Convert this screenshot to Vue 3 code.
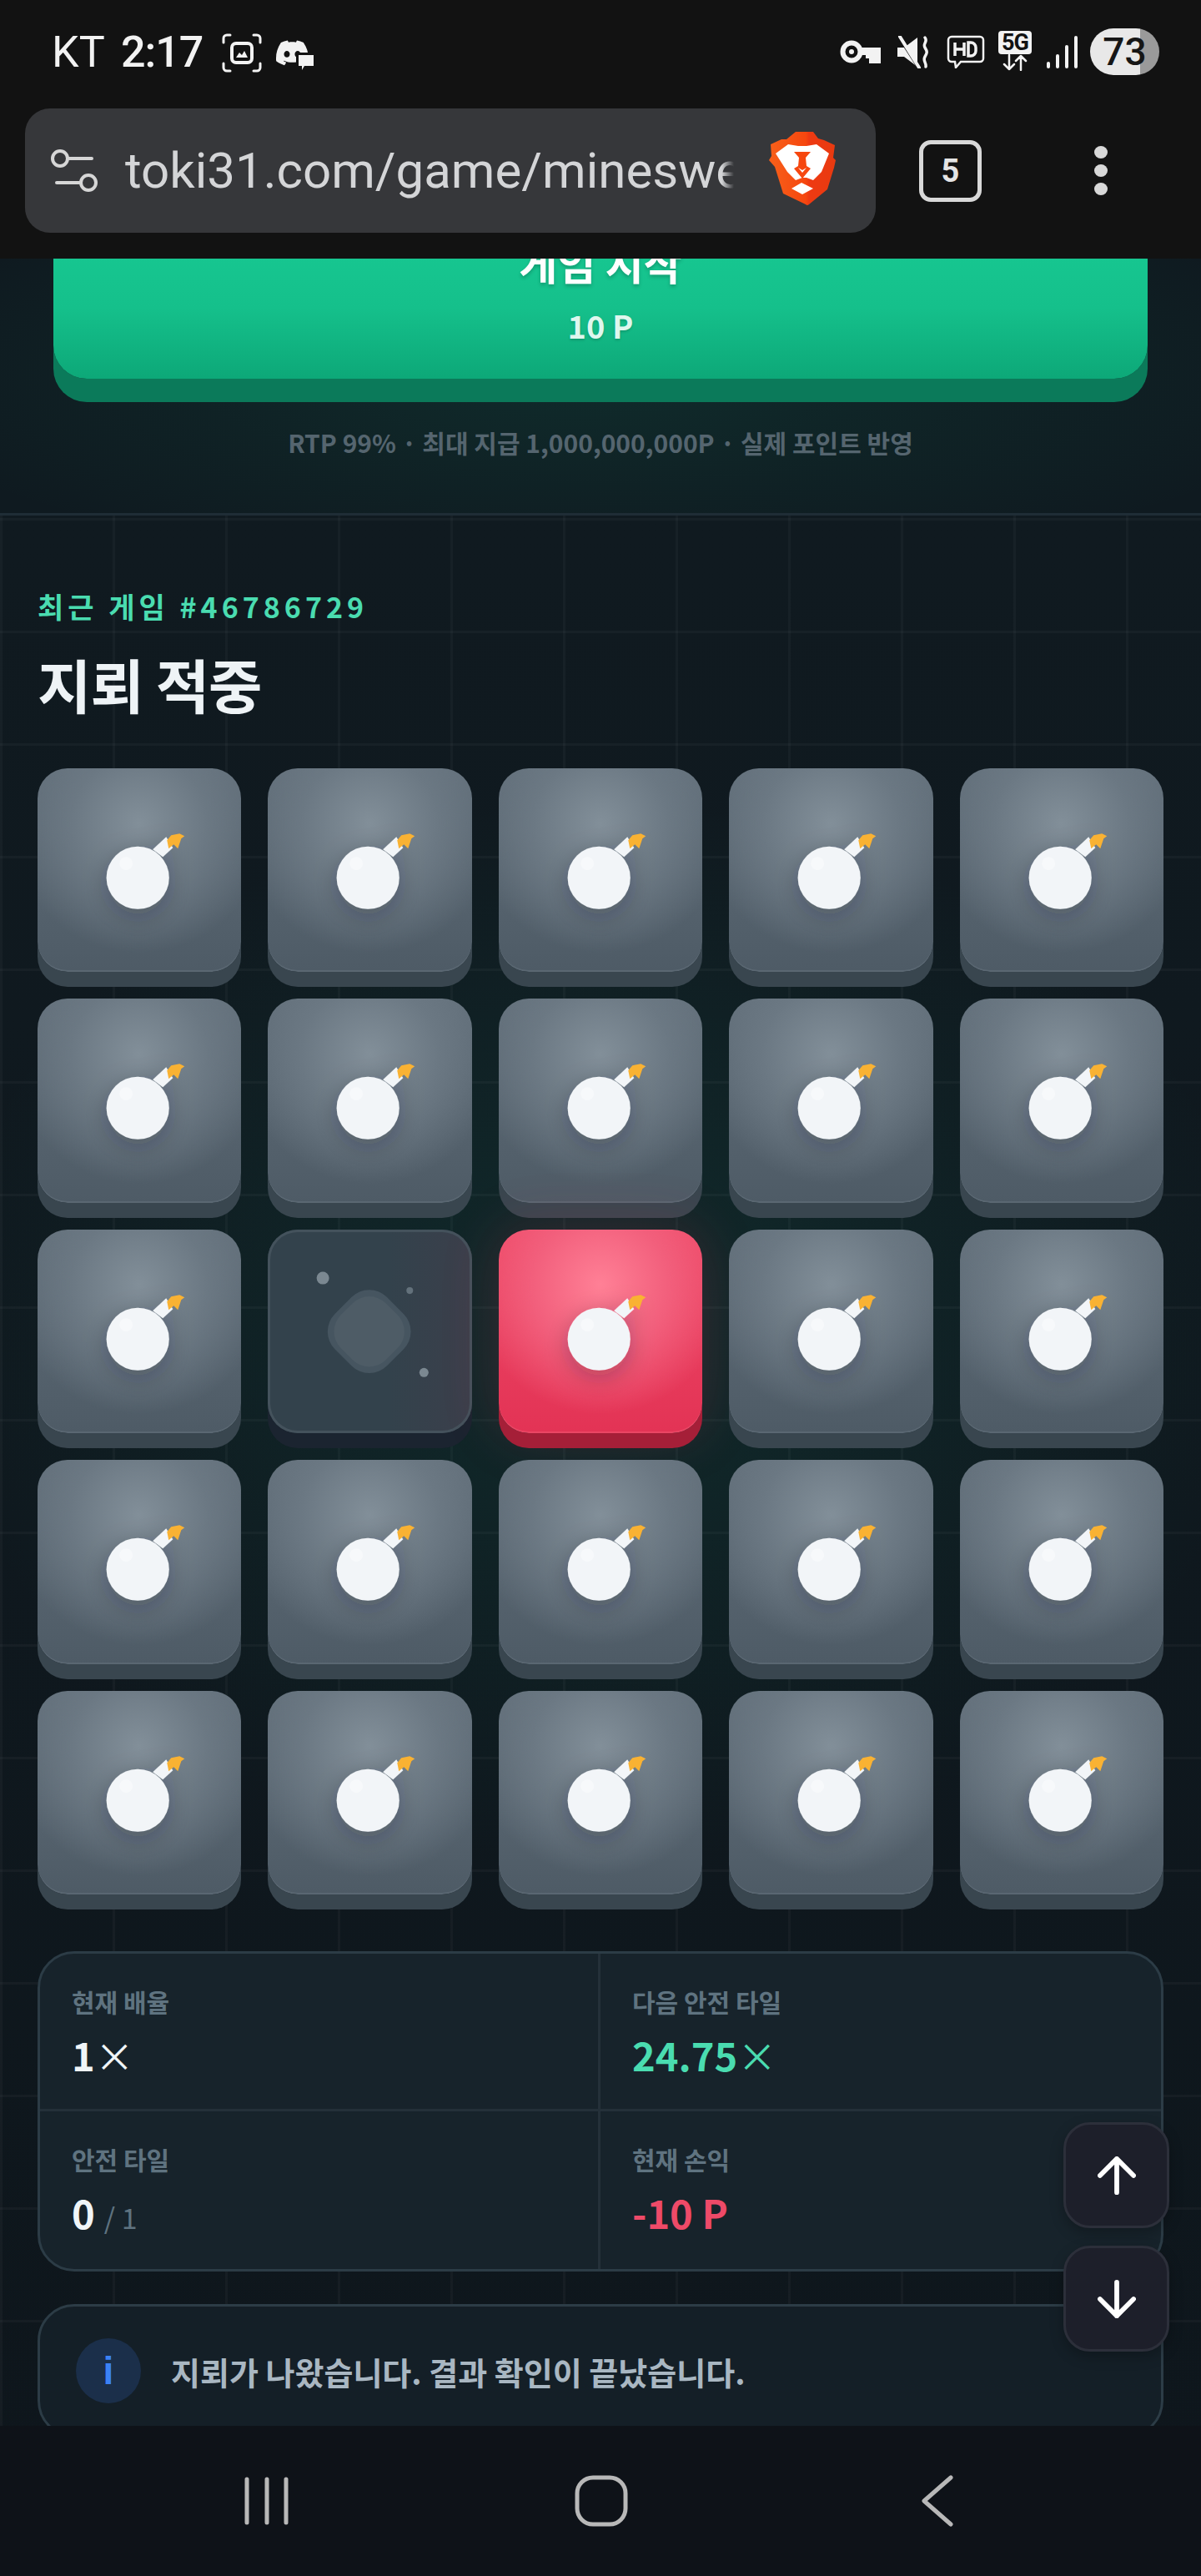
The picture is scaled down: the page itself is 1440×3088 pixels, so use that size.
<template>
  <div class="phone">
    <header class="chrome">
      <div class="status">
        <div class="status-left">
          <span class="carrier">KT</span>
          <span class="clock">2:17</span>
          <svg class="ic-shot" viewBox="0 0 48 47" fill="none" stroke="#f2f2f2" stroke-width="3" stroke-linecap="round">
            <path d="M10 2H6a4 4 0 0 0-4 4v5M38 2h4a4 4 0 0 1 4 4v5M2 36v5a4 4 0 0 0 4 4h4M46 36v5a4 4 0 0 1-4 4h-4" />
            <rect x="12" y="12" width="24" height="23" rx="5" stroke-width="4" />
            <path d="M17 29l4-6 3 3 3-5 4 8z" fill="#f2f2f2" stroke="none" />
          </svg>
          <svg class="ic-discord" viewBox="0 0 45 40">
            <path transform="scale(1.62)" fill="#f2f2f2" fill-rule="evenodd" d="M20.317 4.3698a19.7913 19.7913 0 00-4.8851-1.5152.0741.0741 0 00-.0785.0371c-.211.3753-.4447.8648-.6083 1.2495-1.8447-.2762-3.68-.2762-5.4868 0-.1636-.3933-.4058-.8742-.6177-1.2495a.077.077 0 00-.0785-.037 19.7363 19.7363 0 00-4.8852 1.515.0699.0699 0 00-.0321.0277C.5334 9.0458-.319 13.5799.0992 18.0578a.0824.0824 0 00.0312.0561c2.0528 1.5076 4.0413 2.4228 5.9929 3.0294a.0777.0777 0 00.0842-.0276c.4616-.6304.8731-1.2952 1.226-1.9942a.076.076 0 00-.0416-.1057c-.6528-.2476-1.2743-.5495-1.8722-.8923a.077.077 0 01-.0076-.1277c.1258-.0943.2517-.1923.3718-.2914a.0743.0743 0 01.0776-.0105c3.9278 1.7933 8.18 1.7933 12.0614 0a.0739.0739 0 01.0785.0095c.1202.099.246.1981.3728.2924a.077.077 0 01-.0066.1276 12.2986 12.2986 0 01-1.873.8914.0766.0766 0 00-.0407.1067c.3604.698.7719 1.3628 1.225 1.9932a.076.076 0 00.0842.0286c1.961-.6067 3.9495-1.5219 6.0023-3.0294a.077.077 0 00.0313-.0552c.5004-5.177-.8382-9.6739-3.5485-13.6604a.061.061 0 00-.0312-.0286zM8.02 15.3312c-1.1825 0-2.1569-1.0857-2.1569-2.419 0-1.3332.9555-2.4189 2.157-2.4189 1.2108 0 2.1757 1.0952 2.1568 2.419 0 1.3332-.9555 2.4189-2.1569 2.4189zm7.9748 0c-1.1825 0-2.1569-1.0857-2.1569-2.419 0-1.3332.9554-2.4189 2.1569-2.4189 1.2108 0 2.1757 1.0952 2.1568 2.419 0 1.3332-.946 2.4189-2.1568 2.4189Z" />
            <path d="M24 19h21v21H24z" fill="#121212" />
            <path d="M27 22h18v13H34l-3 5v-5h-4z" fill="#f2f2f2" />
          </svg>
        </div>
        <div class="status-right">
          <svg class="ic-key" viewBox="0 0 49 28" fill="none">
            <circle cx="14" cy="14" r="10.500" stroke="#f2f2f2" stroke-width="6" />
            <circle cx="14" cy="14" r="3" fill="#f2f2f2" />
            <path d="M24 9h25v19H35v-6h-4v-4h-7z" fill="#f2f2f2" />
          </svg>
          <svg class="ic-mute" viewBox="0 0 38 39" fill="none" stroke="#f2f2f2">
            <path d="M0 14h8L24 2v35L8 25H0z" fill="#f2f2f2" stroke="none" />
            <path d="M0 -1l25 39" stroke-width="3" stroke="#121212" />
            <path d="M3 1l23 37" stroke-width="4" stroke-linecap="round" />
            <path d="M33 2c4 5-3 7 0 12s3 6 0 11 2 7 1 12" stroke-width="3.500" stroke-linecap="round" />
          </svg>
          <svg class="ic-hd" viewBox="0 0 46 40" fill="none" stroke="#f2f2f2">
            <path d="M6 2h34a4 4 0 0 1 4 4v22a4 4 0 0 1-4 4H17l-6 7-1-7H6a4 4 0 0 1-4-4V6a4 4 0 0 1 4-4z" stroke-width="2.500" />
            <path d="M10 9v16M21 9v16M10 17h11" stroke-width="3.500" />
            <path d="M26 9v16h3a6 6 0 0 0 6-6v-4a6 6 0 0 0-6-6z" stroke-width="3.500" />
          </svg>
          <div class="ic-5g">
            <span class="fiveg">5G</span>
            <svg viewBox="0 0 40 20" fill="none" stroke="#f2f2f2" stroke-width="2.500" stroke-linecap="round" stroke-linejoin="round">
              <path d="M13 1v17M7 12l6 6 6-6M27 19V2M21 8l6-6 6 6" />
            </svg>
          </div>
          <svg class="ic-signal" viewBox="0 0 37 39" fill="#f2f2f2">
            <rect x="0" y="31" width="4" height="8" rx="2" />
            <rect x="11" y="22" width="4" height="17" rx="2" />
            <rect x="22" y="11" width="4" height="28" rx="2" />
            <rect x="33" y="0" width="4" height="39" rx="2" />
          </svg>
          <div class="battery"><span>73</span></div>
        </div>
      </div>
      <div class="toolbar">
        <div class="urlbar">
          <svg class="ic-tune" viewBox="0 0 56 53" fill="none" stroke="#d6d6d6" stroke-width="4" stroke-linecap="round">
            <circle cx="11" cy="12" r="9" />
            <path d="M21 12h28" />
            <circle cx="45" cy="41" r="9" />
            <path d="M7 41h28" />
          </svg>
          <div class="url">toki31.com/game/minesweeper</div>
          <svg class="ic-brave" viewBox="0 0 80 96">
            <defs>
              <linearGradient id="braveShield" x1="0" x2="1" y1="0" y2="0">
                <stop offset="0" stop-color="#f7601a" />
                <stop offset="0.55" stop-color="#f6470f" />
                <stop offset="0.6" stop-color="#ee3a12" />
                <stop offset="1" stop-color="#e93a10" />
              </linearGradient>
            </defs>
            <path fill="url(#braveShield)" d="M32 1h21l6 8 7 2 13 6-2 15 3 3-2 9-8 26-22 18a3 3 0 0 1-4 0L17 75 7 43 0 35l3-5-1-14 13-6h6z" />
            <path fill="#fff" d="M8 27l15-11 12 2h10l12-2 15 11-9 22-10 10-8-3-5 0-8 3-10-10z" />
            <path fill="#fff" d="M39 62l14 7-13 7-13-7z" />
            <path fill="#f6470f" d="M30 25h20l-6 7 1 10 5 3-10 12-10-12 5-3 1-10z" />
            <path fill="#fff" d="M35 44l5 3 5-3-5 6z" />
          </svg>
        </div>
        <div class="tabs">5</div>
        <div class="menu"><i></i><i></i><i></i></div>
      </div>
    </header>

    <main class="page">
      <section class="hero">
        <button class="start-btn">
          <span class="start-title">게임 시작</span>
          <span class="start-cost">10 P</span>
        </button>
        <p class="caption">RTP 99% · 최대 지급 1,000,000,000P · 실제 포인트 반영</p>
      </section>

      <section class="board">
        <div class="eyebrow">최근 게임 #46786729</div>
        <h1 class="result-title">지뢰 적중</h1>

        <div class="grid">
          <div v-for="t in tiles" :key="t.id" class="tile" :class="t.kind">
            <svg v-if="t.kind !== 'empty'" class="tile-art" viewBox="0 0 244 244">
              <defs>
                <filter :id="'soft' + t.id" x="-50%" y="-50%" width="200%" height="200%">
                  <feDropShadow dx="0" dy="8" stdDeviation="14" flood-color="#1b2229" flood-opacity="0.28" />
                </filter>
              </defs>
              <g :filter="'url(#soft' + t.id + ')'">
                <path d="M138 97l16-15 8 13-12 11z" fill="#f2f5f8" />
                <circle cx="120" cy="131" r="37.500" fill="#f2f5f8" />
              </g>
              <circle cx="106" cy="114" r="8" fill="#fff" opacity="0.4" />
              <path d="M155 86l5-6 10-2 6 3-4 3-4 12-5-5-6 5z" fill="#f9b233" />
            </svg>
            <svg v-else class="tile-art" viewBox="0 0 244 244">
              <rect x="77.500" y="78" width="88" height="88" rx="30" transform="rotate(45 121.500 122)" fill="#465560" />
              <rect x="83.500" y="84" width="76" height="76" rx="28" transform="rotate(45 121.500 122)" fill="#4e5c66" />
              <circle cx="66" cy="58" r="7.500" fill="#7b8891" />
              <circle cx="170" cy="73" r="4" fill="#63717b" />
              <circle cx="187" cy="171" r="5.500" fill="#7b8891" />
            </svg>
          </div>
        </div>

        <div class="stats">
          <div v-for="s in stats" :key="s.label" class="stat">
            <div class="stat-label">{{ s.label }}</div>
            <div class="stat-value" :class="s.tone">
              {{ s.value }}<span v-if="s.times" class="times">×</span><span v-if="s.sub" class="sub">{{ s.sub }}</span>
            </div>
          </div>
        </div>

        <div class="notice">
          <span class="notice-icon">i</span>
          <span class="notice-text">지뢰가 나왔습니다. 결과 확인이 끝났습니다.</span>
        </div>
      </section>

      <div class="scroll-btns">
        <button class="scroll-btn" aria-label="up">
          <svg viewBox="0 0 48 48" fill="none" stroke="#fff" stroke-width="6" stroke-linecap="round" stroke-linejoin="round">
            <path d="M24 45V3M3 24L24 3l21 21" />
          </svg>
        </button>
        <button class="scroll-btn" aria-label="down">
          <svg viewBox="0 0 48 48" fill="none" stroke="#fff" stroke-width="6" stroke-linecap="round" stroke-linejoin="round">
            <path d="M24 3v42M3 24l21 21 21-21" />
          </svg>
        </button>
      </div>
    </main>

    <nav class="navbar">
      <svg class="nav-recent" viewBox="0 0 54 58" fill="none" stroke="#b8b8b8" stroke-width="5" stroke-linecap="round">
        <path d="M3 3v52M27 3v52M50 3v52" />
      </svg>
      <svg class="nav-home" viewBox="0 0 64 62" fill="none" stroke="#b8b8b8" stroke-width="5">
        <rect x="3" y="3" width="58" height="56" rx="19" />
      </svg>
      <svg class="nav-back" viewBox="0 0 38 62" fill="none" stroke="#b8b8b8" stroke-width="5" stroke-linecap="round" stroke-linejoin="round">
        <path d="M35 3L3 31l32 28" />
      </svg>
    </nav>
  </div>
</template>

<script setup>
const tiles = Array.from({ length: 25 }, (_, i) => ({
  id: i,
  kind: i === 11 ? 'empty' : i === 12 ? 'hit' : 'mine',
}))

const stats = [
  { label: '현재 배율', value: '1', times: true },
  { label: '다음 안전 타일', value: '24.75', times: true, tone: 'green' },
  { label: '안전 타일', value: '0', sub: '/ 1' },
  { label: '현재 손익', value: '-10 P', tone: 'red' },
]
</script>

<style scoped>
.phone {
  width: 1440px;
  height: 3088px;
  display: flex;
  flex-direction: column;
  overflow: hidden;
  font-family: "Noto Sans CJK KR", "Noto Sans", sans-serif;
  background: #0f181e;
}

/* browser chrome */
.chrome {
  height: 310px;
  flex: none;
  background: #121212;
  position: relative;
  z-index: 2;
}

.status {
  height: 124px;
  display: flex;
  align-items: center;
  justify-content: space-between;
  padding: 0 50px 0 62px;
  color: #f2f2f2;
  font-family: Roboto, sans-serif;
}

.status-left {
  display: flex;
  align-items: center;
}

.carrier {
  font-size: 52px;
  font-weight: 400;
  width: 83px;
}

.clock {
  font-size: 52px;
  font-weight: 500;
  letter-spacing: -1px;
  width: 121px;
}

.ic-shot {
  width: 48px;
  height: 47px;
  margin-top: 3px;
}

.ic-discord {
  width: 45px;
  height: 40px;
  margin: 4px 0 0 17px;
}

.status-right {
  display: flex;
  align-items: center;
}

.ic-key {
  width: 49px;
  height: 28px;
  margin-right: 20px;
}

.ic-mute {
  width: 38px;
  height: 39px;
  margin-right: 21px;
}

.ic-hd {
  width: 46px;
  height: 40px;
  margin-right: 16px;
}

.ic-5g {
  width: 40px;
  margin-right: 18px;
  margin-top: -3px;
}

.fiveg {
  display: block;
  height: 28px;
  line-height: 28px;
  text-align: center;
  font-size: 27px;
  font-weight: 700;
  background: #f2f2f2;
  color: #121212;
  border-radius: 4px;
  letter-spacing: -1px;
}

.ic-5g svg {
  display: block;
  width: 40px;
  height: 20px;
}

.ic-signal {
  width: 37px;
  height: 39px;
  margin-right: 15px;
}

.battery {
  width: 83px;
  height: 56px;
  border-radius: 28px;
  background: linear-gradient(90deg, #e8e8e8 72%, #9a9a9a 72%);
  color: #161616;
  font-size: 46px;
  font-weight: 500;
  line-height: 56px;
  text-align: center;
}

.toolbar {
  display: flex;
  align-items: center;
  padding: 6px 0 0 30px;
}

.urlbar {
  width: 1020px;
  height: 149px;
  border-radius: 30px;
  background: #36373a;
  display: flex;
  align-items: center;
  padding-left: 31px;
  box-sizing: border-box;
}

.ic-tune {
  width: 56px;
  height: 53px;
  flex: none;
}

.url {
  width: 730px;
  margin-left: 33px;
  overflow: hidden;
  white-space: nowrap;
  font-family: Roboto, sans-serif;
  font-size: 60px;
  color: #d4d5d7;
  -webkit-mask-image: linear-gradient(90deg, #000 98%, transparent 100%);
  mask-image: linear-gradient(90deg, #000 98%, transparent 100%);
}

.ic-brave {
  width: 80px;
  height: 96px;
  margin-left: 42px;
  flex: none;
}

.tabs {
  width: 75px;
  height: 74px;
  box-sizing: border-box;
  margin-left: 52px;
  border: 5px solid #d8d8d8;
  border-radius: 14px;
  color: #e4e4e4;
  font-family: Roboto, sans-serif;
  font-size: 38px;
  font-weight: 700;
  line-height: 64px;
  text-align: center;
}

.menu {
  margin-left: 135px;
  display: flex;
  flex-direction: column;
  gap: 7px;
}

.menu i {
  display: block;
  width: 16px;
  height: 15px;
  border-radius: 50%;
  background: #d8d8d8;
}

/* page */
.page {
  flex: 1;
  min-height: 0;
  position: relative;
  overflow: hidden;
}

.hero {
  height: 308px;
  box-sizing: border-box;
  border-bottom: 3px solid #1f2d36;
  background:
    radial-gradient(ellipse 900px 240px at 50% 140px, rgba(22, 198, 144, 0.1), transparent),
    #0f1a20;
  overflow: hidden;
  text-align: center;
}

.start-btn {
  display: block;
  width: 1312px;
  box-sizing: border-box;
  margin: -26px auto 0;
  padding: 0 0 39px;
  border: 0;
  border-radius: 0 0 40px 40px;
  background: linear-gradient(180deg, #17c892 0%, #15c08b 50%, #0da878 100%);
  box-shadow: 0 28px 0 #0b7a5a;
  color: #fff;
  font-family: inherit;
}

.start-title {
  display: block;
  font-size: 50px;
  font-weight: 700;
  line-height: 60px;
  text-shadow: 0 3px 4px rgba(0, 0, 0, 0.2);
}

.start-cost {
  display: block;
  margin-top: 21px;
  font-size: 38px;
  font-weight: 700;
  line-height: 50px;
  color: #def7ee;
  text-shadow: 0 2px 3px rgba(0, 0, 0, 0.15);
}

.caption {
  margin: 56px 0 0;
  font-size: 30px;
  font-weight: 700;
  line-height: 40px;
  color: #55656f;
}

.board {
  height: 2400px;
  box-sizing: border-box;
  padding: 81px 45px 0;
  background-image:
    linear-gradient(rgba(255, 255, 255, 0.03) 3px, transparent 3px),
    linear-gradient(90deg, rgba(255, 255, 255, 0.03) 3px, transparent 3px),
    radial-gradient(ellipse 800px 640px at 50% 980px, rgba(24, 150, 120, 0.15), transparent),
    linear-gradient(180deg, #101a20, #0e161c);
  background-size: 135px 135px, 135px 135px, auto, auto;
  background-position: 0 3px, 0 0, 0 0, 0 0;
}

.eyebrow {
  font-size: 34px;
  font-weight: 700;
  line-height: 56px;
  letter-spacing: 5px;
  color: #4adcb0;
}

.result-title {
  margin: 23px 0 0;
  font-size: 70px;
  font-weight: 700;
  line-height: 84px;
  letter-spacing: -1px;
  color: #eef3f6;
}

.grid {
  margin-top: 59px;
  display: grid;
  grid-template-columns: repeat(5, 1fr);
  gap: 32px;
}

.tile {
  aspect-ratio: 1;
  border-radius: 36px;
  background:
    radial-gradient(circle at 50% 27%, #828f99 0%, #6b7883 38%, rgba(90, 103, 114, 0) 72%),
    linear-gradient(180deg, #616e79 0%, #4e5b66 100%);
  box-shadow: inset 0 -2px 0 #5a6772, 0 18px 0 #39464f;
}

.tile.hit {
  background:
    radial-gradient(circle at 50% 27%, #ff8096 0%, #f25f7c 38%, rgba(232, 64, 95, 0) 72%),
    linear-gradient(180deg, #ee4a68 0%, #e33355 100%);
  box-shadow: inset 0 -2px 0 #ea4664, 0 18px 0 #a51f38, 0 0 70px rgba(230, 50, 85, 0.2);
}

.tile.empty {
  background: linear-gradient(90deg, #33424c 0%, #33424c 60%, #3b3f4b 100%);
  box-shadow: inset 0 0 0 3px #44525c, 0 18px 0 #1b2430;
}

.tile-art {
  display: block;
  width: 100%;
  height: 100%;
}

.stats {
  margin-top: 68px;
  display: grid;
  grid-template-columns: 1fr 1fr;
  border: 3px solid #2c3c46;
  border-radius: 44px;
  background: #17232b;
  overflow: hidden;
}

.stat {
  height: 189px;
  box-sizing: border-box;
  padding: 37px 38px 0;
  border-bottom: 3px solid #243039;
}

.stat:nth-child(odd) {
  border-right: 3px solid #243039;
}

.stat:nth-last-child(-n + 2) {
  border-bottom: 0;
}

.stat-label {
  font-size: 30px;
  font-weight: 700;
  line-height: 40px;
  color: #5f7380;
}

.stat-value {
  margin-top: 12px;
  font-size: 47px;
  font-weight: 700;
  line-height: 64px;
  color: #f0f5f8;
}

.stat-value.green {
  color: #4adcb0;
}

.stat-value.red {
  color: #ee4a68;
}

.times {
  font-weight: 400;
}

.sub {
  margin-left: 11px;
  font-size: 34px;
  font-weight: 400;
  color: #5f7380;
}

.notice {
  margin-top: 39px;
  height: 160px;
  box-sizing: border-box;
  padding-left: 43px;
  border: 3px solid #2c3c46;
  border-radius: 44px;
  background: #141f27;
  display: flex;
  align-items: center;
}

.notice-icon {
  width: 78px;
  height: 78px;
  flex: none;
  border-radius: 50%;
  background: #1b2f4a;
  color: #3b82f6;
  font-family: "Liberation Sans", sans-serif;
  font-size: 46px;
  font-weight: 700;
  line-height: 78px;
  text-align: center;
}

.notice-text {
  margin-left: 36px;
  font-size: 38px;
  font-weight: 700;
  color: #a9b7c2;
}

.scroll-btns {
  position: absolute;
  right: 38px;
  top: 2234px;
  display: flex;
  flex-direction: column;
  gap: 21px;
}

.scroll-btn {
  width: 127px;
  height: 127px;
  box-sizing: border-box;
  padding: 0;
  border: 3px solid #2c2f3a;
  border-radius: 32px;
  background: #1d1f2a;
  box-shadow: 0 6px 16px rgba(0, 0, 0, 0.25);
  display: flex;
  align-items: center;
  justify-content: center;
}

.scroll-btn svg {
  width: 46px;
  height: 46px;
}

/* android nav */
.navbar {
  height: 180px;
  flex: none;
  background: #0e1218;
  position: relative;
  display: flex;
  align-items: center;
  padding: 0 0 0 293px;
  box-sizing: border-box;
}

.nav-recent {
  width: 54px;
  height: 58px;
}

.nav-home {
  width: 64px;
  height: 62px;
  margin-left: 342px;
}

.nav-back {
  width: 38px;
  height: 62px;
  margin-left: 352px;
}
</style>

<style>
html,
body {
  margin: 0;
  background: #0f181e;
}
</style>
